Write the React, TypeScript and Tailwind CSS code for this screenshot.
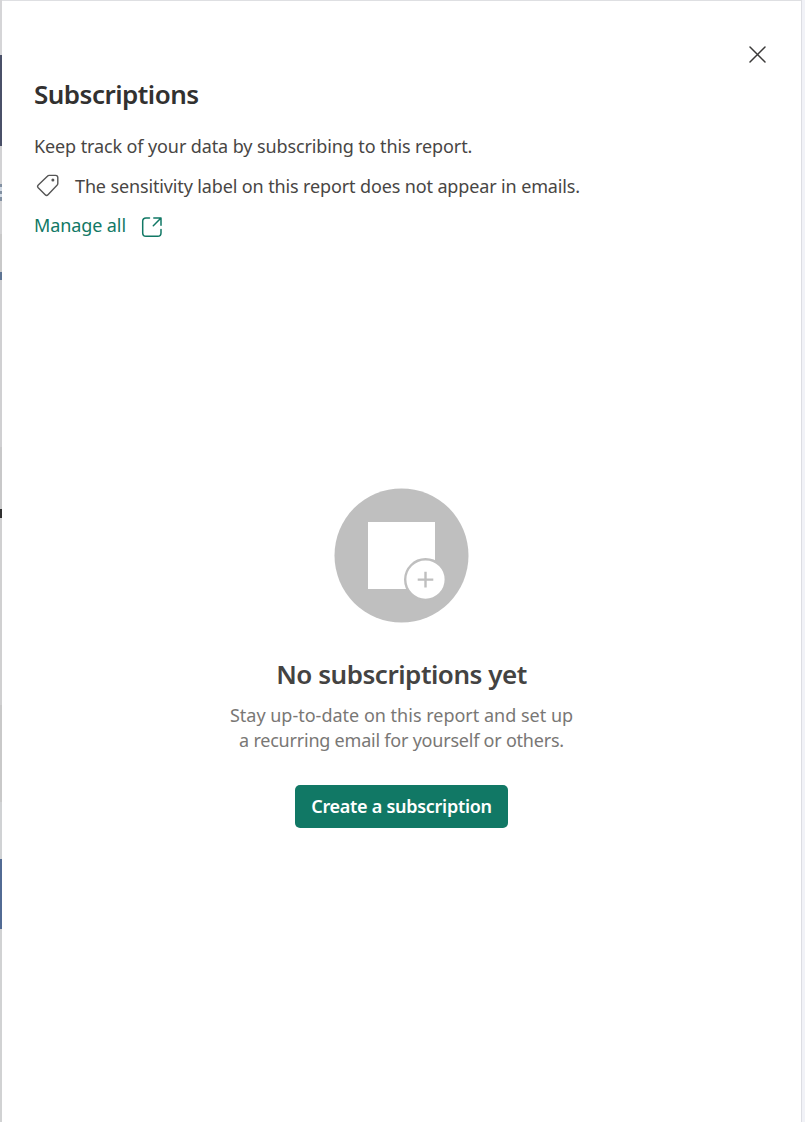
const edge: [string, string][] = [
  ["h-[55px]", "bg-[#d5d5d7]"],
  ["h-[91px]", "bg-[#4a5068]"],
  ["h-[38px]", "bg-[#d2d2d4]"],
  ["h-[3px]", "bg-[#8290a2]"],
  ["h-[4px]", "bg-[#d3dbe5]"],
  ["h-[3px]", "bg-[#8290a2]"],
  ["h-[3px]", "bg-[#d3dbe5]"],
  ["h-[4px]", "bg-[#8290a2]"],
  ["h-[33px]", "bg-[#d2d2d4]"],
  ["h-[38px]", "bg-[#c9c9c9]"],
  ["h-[8px]", "bg-[#5e7493]"],
  ["h-[167px]", "bg-[#d0d0d2]"],
  ["h-[62px]", "bg-[#c8c8c9]"],
  ["h-[9px]", "bg-[#303030]"],
  ["h-[187px]", "bg-[#d0d0d1]"],
  ["h-[97px]", "bg-[#c9c9c9]"],
  ["h-[57px]", "bg-[#d0d2d4]"],
  ["h-[70px]", "bg-[#526b94]"],
  ["h-[193px]", "bg-[#d1d2d3]"],
];

function TagIcon() {
  return (
    <svg className="block h-6 w-6" viewBox="0 0 24 24" fill="none" stroke="#555" strokeWidth="1.4" strokeLinejoin="round">
      <path d="M13.2 1.4 H19.6 Q21.8 1.4 21.8 3.6 V9.4 Q21.8 10.5 21 11.3 L12 20.7 Q10.6 22.1 9.2 20.7 L2.2 13.7 Q0.9 12.3 2.3 10.9 L11.4 2.2 Q12.1 1.4 13.2 1.4 Z" />
      <circle cx="16.9" cy="5.9" r="1.5" fill="#555" stroke="none" />
    </svg>
  );
}

function OpenIcon() {
  return (
    <svg className="block h-[22px] w-[22px]" viewBox="0 0 22 22" fill="none" stroke="#117865" strokeWidth="1.5" strokeLinecap="round" strokeLinejoin="round">
      <path d="M8.5 2 H5 Q1.7 2 1.7 5.3 V17 Q1.7 20.3 5 20.3 H16.7 Q20 20.3 20 17 V13.6" />
      <path d="M12.8 2 H20 V9.2 M20 2 L12.3 9.7" />
    </svg>
  );
}

export default function App() {
  return (
    <div className="flex h-[1122px] w-[805px] overflow-hidden bg-[#f1f2f7] font-['Noto_Sans','Open_Sans',sans-serif]">
      <div className="flex w-[2px] shrink-0 flex-col">
        {edge.map(([h, c], i) => (
          <div key={i} className={`${h} ${c} shrink-0`} />
        ))}
      </div>
      <main className="flex w-[800px] shrink-0 flex-col border-t border-r border-t-[#dedfe2] border-r-[#dcdde3] bg-white">
        <div className="flex h-[74px] shrink-0 items-end justify-end pr-[34px] pb-[11px]">
          <button aria-label="Close" className="h-[19px] w-[19px]">
            <svg className="block h-[19px] w-[19px]" viewBox="0 0 19 19" stroke="#3b3a39" strokeWidth="1.5" strokeLinecap="round">
              <path d="M2 2 L17 17 M17 2 L2 17" />
            </svg>
          </button>
        </div>
        <header className="flex h-[166px] shrink-0 flex-col items-start pl-[32px] whitespace-nowrap">
          <h1 className="h-[40px] text-[26px] leading-[38px] font-semibold tracking-[-0.52px] text-[#323130]">Subscriptions</h1>
          <p className="mt-[18px] h-[28px] text-[18px] leading-[26px] tracking-[-0.11px] text-[#484644]">Keep track of your data by subscribing to this report.</p>
          <div className="mt-[12px] flex h-[26px] items-center pl-[2px] text-[#484644]">
            <TagIcon />
            <span className="ml-[15px] text-[18px] leading-[26px] tracking-[-0.13px]">The sensitivity label on this report does not appear in emails.</span>
          </div>
          <a className="mt-[12px] flex h-[28px] items-center text-[#117865]">
            <span className="text-[18px] leading-[26px] tracking-[-0.1px]">Manage all</span>
            <span className="ml-[15px] pt-[3px]"><OpenIcon /></span>
          </a>
        </header>
        <section className="flex flex-col items-center pt-[247px] text-center whitespace-nowrap">
          <svg className="block h-[135px] w-[135px]" viewBox="0 0 135 135">
            <circle cx="67.5" cy="67.5" r="67" fill="#bfbfbf" />
            <path d="M34 34 H101 V101 H34 Z" fill="white" />
            <circle cx="91.5" cy="91.6" r="20.3" fill="white" stroke="#bfbfbf" strokeWidth="2.4" />
            <path d="M91.5 83.8 V99.4 M83.7 91.6 H99.3" stroke="#bfbfbf" strokeWidth="2.4" />
          </svg>
          <h2 className="mt-[31px] text-[26px] leading-[40px] font-semibold tracking-[-0.47px] text-[#444342]">No subscriptions yet</h2>
          <p className="mt-[9px] text-[18px] leading-[25px] text-[#797775]">
            Stay up-to-date on this report and set up<br />
            <span className="tracking-[-0.22px]">a recurring email for yourself or others.</span>
          </p>
          <button className="mt-[32px] h-[43px] w-[213px] rounded-[5px] bg-[#117865] pb-px text-[18px] leading-[26px] font-semibold tracking-[-0.28px] text-white">Create a subscription</button>
        </section>
      </main>
    </div>
  );
}
